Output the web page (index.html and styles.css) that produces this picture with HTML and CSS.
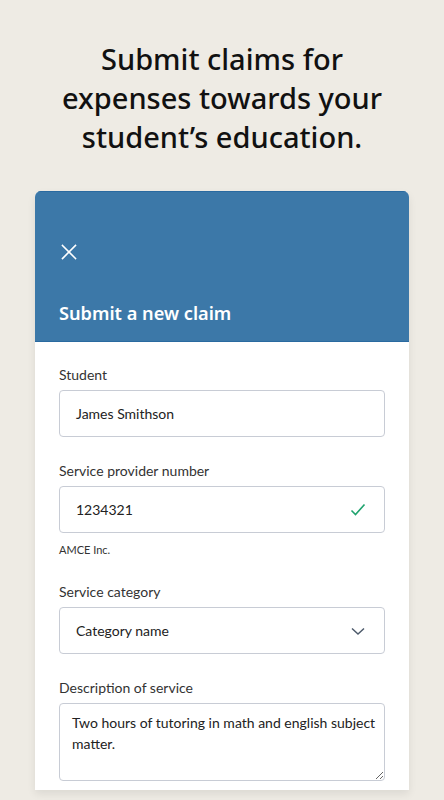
FILE: index.html
```html
<!DOCTYPE html>
<html lang="en">
<head>
<meta charset="utf-8">
<title>Submit a new claim</title>
<link rel="stylesheet" href="styles.css">
</head>
<body>
<div class="page">
  <h1 class="hero">Submit claims for expenses towards your student’s education.</h1>
  <div class="card">
    <div class="card-head">
      <button class="close" aria-label="Close">
        <svg width="20" height="20" viewBox="0 0 20 20"><path d="M3.5 3.5 L16.5 16.5 M16.5 3.5 L3.5 16.5" stroke="#fff" stroke-width="1.6" fill="none" stroke-linecap="square"/></svg>
      </button>
      <h2 class="card-title">Submit a new claim</h2>
    </div>
    <div class="card-body">
      <div class="field">
        <label class="label">Student</label>
        <div class="box"><span>James Smithson</span></div>
      </div>
      <div class="field">
        <label class="label">Service provider number</label>
        <div class="box"><span>1234321</span>
          <svg class="icon" width="16" height="14" viewBox="0 0 16 14"><path d="M1.5 7.5 L5.5 11.5 L14.5 1.5" stroke="#1fa36e" stroke-width="1.6" fill="none"/></svg>
        </div>
        <div class="help">AMCE Inc.</div>
      </div>
      <div class="field">
        <label class="label">Service category</label>
        <div class="box"><span>Category name</span>
          <svg class="icon" width="16" height="10" viewBox="0 0 16 10"><path d="M2 2.5 L8 8 L14 2.5" stroke="#4d5a6b" stroke-width="1.5" fill="none"/></svg>
        </div>
      </div>
      <div class="field">
        <label class="label">Description of service</label>
        <textarea class="area" readonly>Two hours of tutoring in math and english subject matter.</textarea>
      </div>
    </div>
  </div>
</div>
</body>
</html>
```

FILE: styles.css
```css
* { box-sizing: border-box; }
html, body { margin: 0; padding: 0; }
body {
  background: #eeebe4;
  font-family: Lato, "Noto Sans", sans-serif;
  width: 444px;
  height: 800px;
  overflow: hidden;
}
.page {
  padding-top: 39px;
}
.hero {
  margin: 0 auto;
  width: 340px;
  text-align: center;
  font-family: "Noto Sans", sans-serif;
  font-size: 29px;
  line-height: 39px;
  font-weight: 500;
  color: #111;
}
.card {
  margin: 35px 35px 0;
  border-radius: 6px 6px 0 0;
  overflow: hidden;
  background: #fff;
  box-shadow: 0 4px 8px rgba(0,0,0,0.08);
}
.card-head {
  background: #3c78a8;
  border-top: 1px solid #2a6aa0;
  border-bottom: 1px solid #2a6aa0;
  height: 151px;
  padding: 50px 24px 0;
  display: flex;
  flex-direction: column;
  align-items: flex-start;
}
.close {
  width: 20px;
  height: 20px;
  padding: 0;
  border: 0;
  background: none;
  display: block;
}
.close svg { display: block; }
.card-title {
  margin: 39px 0 0;
  color: #fff;
  font-family: "Noto Sans", sans-serif;
  font-size: 18.2px;
  line-height: 25px;
  font-weight: 600;
}
.card-body {
  padding: 23px 24px 9px;
  display: flex;
  flex-direction: column;
  gap: 24px;
}
.field {
  display: flex;
  flex-direction: column;
}
.label {
  font-size: 14px;
  line-height: 20px;
  color: #333;
  margin-bottom: 5px;
}
.box {
  height: 47px;
  border: 1px solid #c8ccd5;
  border-radius: 4px;
  padding: 0 16px;
  display: flex;
  align-items: center;
  justify-content: space-between;
  font-size: 14px;
  color: #222;
}
.icon { display: block; margin-right: 2px; }
.help {
  margin-top: 9px;
  font-size: 11px;
  line-height: 16px;
  color: #333;
}
.area {
  display: block;
  width: 100%;
  height: 78px;
  border: 1px solid #c8ccd5;
  border-radius: 4px;
  padding: 8px 4px 8px 12px;
  font-family: inherit;
  font-size: 14px;
  line-height: 21px;
  color: #222;
  resize: vertical;
  outline: none;
}
```
